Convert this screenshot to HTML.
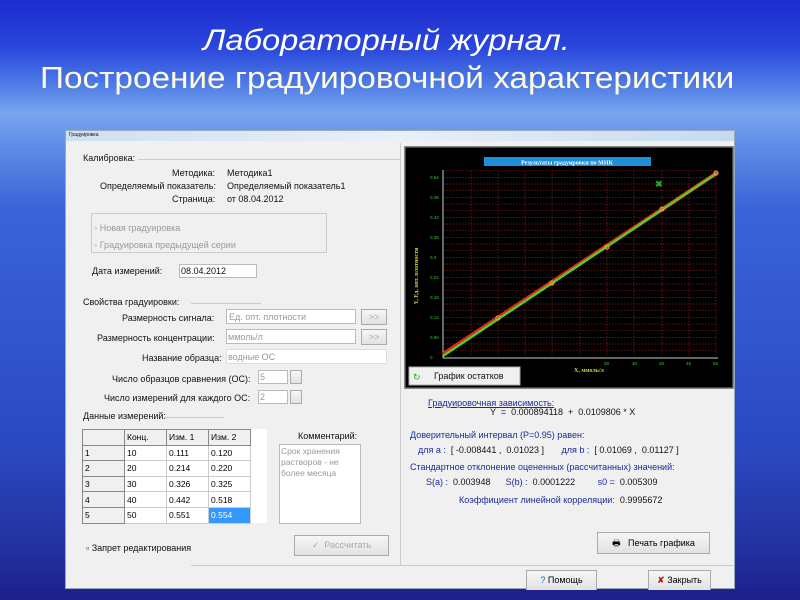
<!DOCTYPE html>
<html><head><meta charset="utf-8"><style>
*{margin:0;padding:0;box-sizing:border-box}
body{width:800px;height:600px;overflow:hidden;position:relative;font-family:"Liberation Sans",sans-serif;
background:linear-gradient(180deg,#1d2bd0 0%,#2a47dc 8%,#4d7be6 14%,#7aa6ee 19%,#5f8ee6 24%,#3b63d8 35%,#3256cc 55%,#2a48c0 75%,#23309e 92%,#1e1f8a 100%)}
.t{position:absolute;color:#fff;white-space:nowrap;transform-origin:0 0}
.w{position:absolute;left:65px;top:130px;width:670px;height:459px;background:#f0f0f0;border:1px solid #9ab}
.a{position:absolute;font-size:9px;color:#111;white-space:nowrap}
.g{color:#999}
.box{position:absolute;background:#fff;border:1px solid #bbb}
.btn{position:absolute;background:linear-gradient(#f6f6f6,#e2e2e2);border:1px solid #aaa;font-size:9px;text-align:center;white-space:nowrap}
.ln{position:absolute;height:1px;background:#ccc}
.b{color:#1a2a9a;font-size:9px}
table{position:absolute;left:16px;top:298px;border-collapse:collapse;font-size:8.5px;background:#fff}
td{border:1px solid #ccc;height:15.6px;padding:0 2px;width:42px}
td.h{background:#f0f0f0;border:1px solid #888}
</style></head><body>
<div class="t" style="left:203px;top:24px;font-size:30px;font-style:italic;transform:scaleX(1.09)">Лабораторный журнал.</div>
<div class="t" style="left:40px;top:60px;font-size:31px;color:#fffbe0;transform:scaleX(1.075)">Построение градуировочной характеристики</div>

<div class="w">
<div style="position:absolute;left:0;top:0;width:668px;height:10px;background:linear-gradient(90deg,#cfe0f2,#e8f0f8,#c6daf0)"></div>
<div class="a" style="left:3px;top:1px;font-size:5px">Градуировка</div>

<div class="a" style="left:17px;top:22px">Калибровка:</div><div class="ln" style="left:72px;top:28px;width:262px"></div>
<div class="a" style="left:106px;top:37px">Методика:</div><div class="a" style="left:161px;top:37px">Методика1</div>
<div class="a" style="left:34px;top:50px">Определяемый показатель:</div><div class="a" style="left:161px;top:50px">Определяемый показатель1</div>
<div class="a" style="left:106px;top:63px">Страница:</div><div class="a" style="left:161px;top:63px">от 08.04.2012</div>
<div style="position:absolute;left:25px;top:82px;width:236px;height:40px;border:1px solid #ccc"></div>
<div class="a g" style="left:28px;top:92px">◦ Новая градуировка</div>
<div class="a g" style="left:28px;top:109px">◦ Градуировка предыдущей серии</div>
<div class="a" style="left:26px;top:135px">Дата измерений:</div>
<div class="box" style="left:113px;top:133px;width:78px;height:14px"><span class="a" style="left:1px;top:1px">08.04.2012</span></div>
<div class="a" style="left:17px;top:166px">Свойства градуировки:</div><div class="ln" style="left:125px;top:172px;width:70px"></div>
<div class="a" style="left:56px;top:182px">Размерность сигнала:</div>
<div class="box" style="left:160px;top:178px;width:130px;height:15px"><span class="a g" style="left:2px;top:2px">Ед. опт. плотности</span></div>
<div class="btn" style="left:295px;top:178px;width:26px;height:16px;color:#aaa;line-height:14px">&gt;&gt;</div>
<div class="a" style="left:31px;top:202px">Размерность концентрации:</div>
<div class="box" style="left:160px;top:198px;width:130px;height:15px"><span class="a g" style="left:1px;top:2px">ммоль/л</span></div>
<div class="btn" style="left:295px;top:198px;width:26px;height:16px;color:#aaa;line-height:14px">&gt;&gt;</div>
<div class="a" style="left:76px;top:222px">Название образца:</div>
<div class="box" style="left:160px;top:218px;width:161px;height:15px;border-color:#ddd"><span class="a g" style="left:1px;top:2px">водные ОС</span></div>
<div class="a" style="left:46px;top:243px">Число образцов сравнения (ОС):</div>
<div class="box" style="left:192px;top:239px;width:30px;height:14px"><span class="a g" style="left:1px;top:1px">5</span></div>
<div class="btn" style="left:224px;top:239px;width:12px;height:14px"></div>
<div class="a" style="left:38px;top:262px">Число измерений для каждого ОС:</div>
<div class="box" style="left:192px;top:259px;width:30px;height:14px"><span class="a g" style="left:1px;top:1px">2</span></div>
<div class="btn" style="left:224px;top:259px;width:12px;height:14px"></div>
<div class="a" style="left:17px;top:280px">Данные измерений:</div><div class="ln" style="left:98px;top:286px;width:60px"></div>
<div style="position:absolute;left:16px;top:298px;width:185px;height:94px;background:#fff"></div>
<table>
<tr><td class="h"></td><td class="h">Конц.</td><td class="h">Изм. 1</td><td class="h">Изм. 2</td></tr>
<tr><td class="h">1</td><td>10</td><td>0.111</td><td>0.120</td></tr>
<tr><td class="h">2</td><td>20</td><td>0.214</td><td>0.220</td></tr>
<tr><td class="h">3</td><td>30</td><td>0.326</td><td>0.325</td></tr>
<tr><td class="h">4</td><td>40</td><td>0.442</td><td>0.518</td></tr>
<tr><td class="h">5</td><td>50</td><td>0.551</td><td style="background:#3399ff;color:#fff">0.554</td></tr>
</table>
<div class="a" style="left:232px;top:300px">Комментарий:</div>
<div class="box" style="left:213px;top:313px;width:82px;height:80px"><div class="a g" style="left:1px;top:1px;white-space:normal;width:78px;line-height:11px;font-size:8.5px">Срок хранения растворов - не более месяца</div></div>
<div class="a" style="left:20px;top:412px">▫ Запрет редактирования</div>
<div class="btn" style="left:228px;top:404px;width:95px;height:21px;color:#aaa;line-height:19px">✓ &nbsp;Рассчитать</div>
<div class="ln" style="left:125px;top:434px;width:543px;background:#ccc"></div>
<div style="position:absolute;left:334px;top:12px;width:1px;height:422px;background:#ccc"></div>

<svg style="position:absolute;left:338px;top:15px" width="330" height="243">
<rect x="0" y="0" width="330" height="243" fill="#000" stroke="#888" stroke-width="3"/>
<rect x="80" y="11" width="167" height="9" fill="#1e8fd8"/>
<text x="163" y="18.5" font-size="6" fill="#fff" text-anchor="middle" font-family="Liberation Serif" font-weight="bold">Результаты градуировки по МНК</text>
<g stroke="#8a1c1c" stroke-width="0.7" stroke-dasharray="1.5,1.5">
<line x1="67" y1="25" x2="67" y2="211"/><line x1="94" y1="25" x2="94" y2="211"/><line x1="121" y1="25" x2="121" y2="211"/><line x1="148" y1="25" x2="148" y2="211"/><line x1="176" y1="25" x2="176" y2="211"/><line x1="203" y1="25" x2="203" y2="211"/><line x1="230" y1="25" x2="230" y2="211"/><line x1="258" y1="25" x2="258" y2="211"/><line x1="285" y1="25" x2="285" y2="211"/><line x1="312" y1="25" x2="312" y2="211"/>
</g>
<path d="M40 204.7H312M40 198H312M40 191.4H312M40 184.7H312M40 178H312M40 171.4H312M40 164.7H312M40 158H312M40 151.4H312M40 144.7H312M40 138H312M40 131.4H312M40 124.7H312M40 118H312M40 111.4H312M40 104.7H312M40 98H312M40 91.4H312M40 84.7H312M40 78H312M40 71.4H312M40 64.7H312M40 58H312M40 51.4H312M40 44.7H312M40 38H312M40 31.4H312M40 24.7H312" stroke="#8a1c1c" stroke-width="0.7" stroke-dasharray="1.5,1.5"/>
<line x1="39" y1="24" x2="39" y2="212" stroke="#ccc"/><line x1="39" y1="212" x2="314" y2="212" stroke="#ccc"/>
<g font-size="4.5" fill="#3c3" font-family="Liberation Sans">
<text x="26" y="213">0</text><text x="26" y="193">0.06</text><text x="26" y="173">0.12</text><text x="26" y="153">0.18</text><text x="26" y="133">0.24</text><text x="26" y="113">0.3</text><text x="26" y="93">0.36</text><text x="26" y="73">0.42</text><text x="26" y="53">0.48</text><text x="26" y="33">0.54</text>
<text x="200" y="219">20</text><text x="228" y="219">30</text><text x="255" y="219">40</text><text x="282" y="219">45</text><text x="309" y="219">50</text>
</g>
<text x="14" y="130" font-size="6" fill="#cc4" font-family="Liberation Serif" font-weight="bold" transform="rotate(-90 14 130)" text-anchor="middle">Y, Ед. опт. плотности</text>
<text x="170" y="226" font-size="6" fill="#cc4" font-family="Liberation Serif" font-weight="bold">X, ммоль/л</text>
<line x1="39" y1="208" x2="313" y2="27" stroke="#d22" stroke-width="4"/>
<line x1="39" y1="210" x2="313" y2="27" stroke="#5c2" stroke-width="2.5"/>
<g fill="none" stroke="#f84" stroke-width="1.2"><circle cx="94" cy="172" r="2"/><circle cx="148" cy="137" r="2"/><circle cx="203" cy="101" r="2"/><circle cx="258" cy="63" r="2"/><circle cx="312" cy="27" r="2"/></g>
<text x="251" y="41" font-size="9" fill="#2a2" font-weight="bold">✖</text>
<rect x="5" y="221" width="111" height="18" fill="#f0f0f0" stroke="#aaa"/>
<text x="9" y="234" font-size="9" fill="#2a2">↻</text>
<text x="30" y="233" font-size="9" fill="#111" font-family="Liberation Sans">График остатков</text>
</svg>

<div class="a b" style="left:362px;top:267px;text-decoration:underline">Градуировочная зависимость:</div>
<div class="a" style="left:424px;top:276px">Y &nbsp;= &nbsp;0.000894118 &nbsp;+ &nbsp;0.0109806 * X</div>
<div class="a b" style="left:344px;top:299px">Доверительный интервал (P=0.95) равен:</div>
<div class="a" style="left:352px;top:314px"><span class="b">для a :</span> &nbsp;[ -0.008441 , &nbsp;0.01023 ] &nbsp; &nbsp; &nbsp; <span class="b">для b :</span> &nbsp;[ 0.01069 , &nbsp;0.01127 ]</div>
<div class="a b" style="left:344px;top:331px">Стандартное отклонение оцененных (рассчитанных) значений:</div>
<div class="a" style="left:360px;top:346px"><span class="b">S(a) :</span> &nbsp;0.003948 &nbsp; &nbsp; &nbsp;<span class="b">S(b) :</span> &nbsp;0.0001222 &nbsp; &nbsp; &nbsp; &nbsp; <span class="b">s0 =</span> &nbsp;0.005309</div>
<div class="a" style="left:393px;top:364px"><span class="b">Коэффициент линейной корреляции:</span> &nbsp;0.9995672</div>
<div class="btn" style="left:531px;top:401px;width:113px;height:22px;line-height:20px">🖶 &nbsp; Печать графика</div>
<div class="btn" style="left:460px;top:439px;width:71px;height:20px;line-height:18px;border-bottom:none"><span style="color:#16a">?</span> Помощь</div>
<div class="btn" style="left:582px;top:439px;width:63px;height:20px;line-height:18px;border-bottom:none"><span style="color:#c00">✘</span> Закрыть</div>
</div>
</body></html>
